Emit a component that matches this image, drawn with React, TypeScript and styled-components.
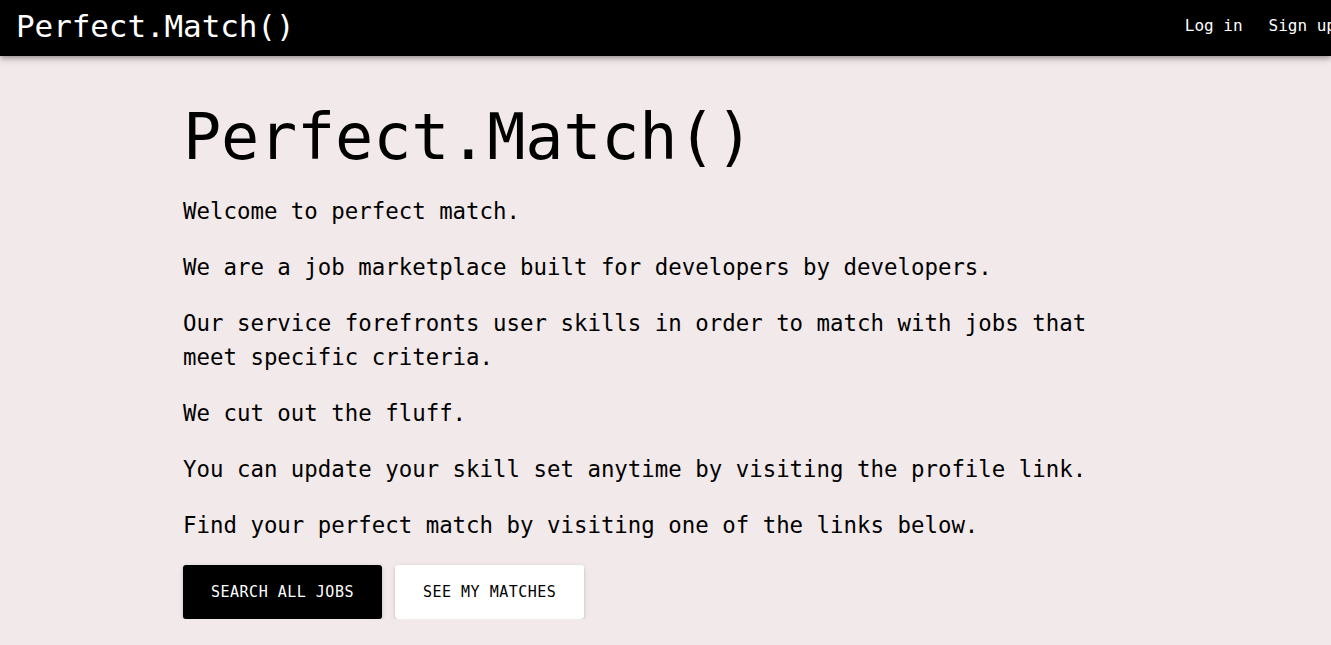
import React from "react";
import styled, { createGlobalStyle } from "styled-components";

const GlobalStyle = createGlobalStyle`
  html, body {
    margin: 0;
    padding: 0;
    background: #f2e9ea;
    overflow-x: hidden;
  }
  body {
    font-family: "DejaVu Sans Mono", "Liberation Mono", monospace;
    color: #000;
  }
  * { box-sizing: border-box; }
`;

const NavBar = styled.header`
  height: 56px;
  background: #000;
  color: #fff;
  display: flex;
  align-items: center;
  justify-content: space-between;
  padding: 0 0 4px 16px;
  overflow: hidden;
  box-shadow: 0 2px 4px -1px rgba(0,0,0,0.2), 0 4px 5px 0 rgba(0,0,0,0.14), 0 1px 10px 0 rgba(0,0,0,0.12);
  position: relative;
  z-index: 1;
`;

const Brand = styled.div`
  font-size: 31px;
  line-height: 1;
  letter-spacing: -0.1px;
`;

const NavLinks = styled.nav`
  display: flex;
  gap: 26px;
  margin-right: -5px;
`;

const NavLink = styled.a`
  font-size: 16px;
  line-height: 1;
  color: #fff;
  text-decoration: none;
  white-space: nowrap;
`;

const Main = styled.main`
  width: 965px;
  margin: 0 auto;
  padding-top: 44px;
  display: flex;
  flex-direction: column;
  gap: 22px;
`;

const Title = styled.h1`
  margin: 0 0 -3px;
  font-size: 63.5px;
  font-weight: 400;
  line-height: 75px;
  letter-spacing: -0.2px;
`;

const Para = styled.p`
  margin: 0;
  font-size: 22.4px;
  line-height: 34px;
`;

const Actions = styled.div`
  display: flex;
  gap: 13px;
  margin-top: 1px;
`;

const Button = styled.button<{ $dark?: boolean }>`
  height: 54px;
  padding: 0 28px;
  border: none;
  border-radius: 3px;
  font-family: "DejaVu Sans Mono", "Liberation Mono", monospace;
  font-size: 15px;
  letter-spacing: 0.5px;
  text-transform: uppercase;
  cursor: pointer;
  background: ${(p) => (p.$dark ? "#000" : "#fff")};
  color: ${(p) => (p.$dark ? "#fff" : "#000")};
  box-shadow: 0 3px 1px -2px rgba(0,0,0,0.2), 0 2px 2px 0 rgba(0,0,0,0.14), 0 1px 5px 0 rgba(0,0,0,0.12);
`;

export default function App() {
  return (
    <>
      <GlobalStyle />
      <NavBar>
        <Brand>Perfect.Match()</Brand>
        <NavLinks>
          <NavLink href="#">Log in</NavLink>
          <NavLink href="#">Sign up</NavLink>
        </NavLinks>
      </NavBar>
      <Main>
        <Title>Perfect.Match()</Title>
        <Para>Welcome to perfect match.</Para>
        <Para>We are a job marketplace built for developers by developers.</Para>
        <Para>
          Our service forefronts user skills in order to match with jobs that
          meet specific criteria.
        </Para>
        <Para>We cut out the fluff.</Para>
        <Para>You can update your skill set anytime by visiting the profile link.</Para>
        <Para>Find your perfect match by visiting one of the links below.</Para>
        <Actions>
          <Button $dark>Search all jobs</Button>
          <Button>See my matches</Button>
        </Actions>
      </Main>
    </>
  );
}
